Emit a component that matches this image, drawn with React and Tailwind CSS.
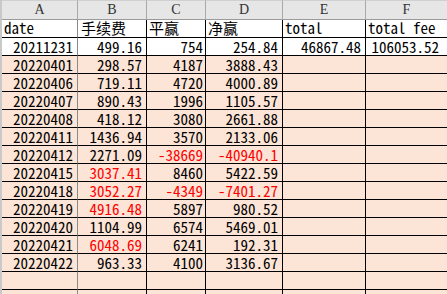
const mono = "font-['Noto_Sans_Mono_CJK_SC','Noto_Sans_CJK_SC',monospace]";

const headers = ['A', 'B', 'C', 'D', 'E', 'F'];

// each row: values for A..F, red = column indexes in red, white = plain background
const rows = [
  { v: ['date', '手续费', '平赢', '净赢', 'total', 'total fee'], text: true, white: true },
  { v: ['20211231', '499.16', '754', '254.84', '46867.48', '106053.52'], white: true },
  { v: ['20220401', '298.57', '4187', '3888.43', '', ''] },
  { v: ['20220406', '719.11', '4720', '4000.89', '', ''] },
  { v: ['20220407', '890.43', '1996', '1105.57', '', ''] },
  { v: ['20220408', '418.12', '3080', '2661.88', '', ''] },
  { v: ['20220411', '1436.94', '3570', '2133.06', '', ''] },
  { v: ['20220412', '2271.09', '-38669', '-40940.1', '', ''], red: [2, 3] },
  { v: ['20220415', '3037.41', '8460', '5422.59', '', ''], red: [1] },
  { v: ['20220418', '3052.27', '-4349', '-7401.27', '', ''], red: [1, 2, 3] },
  { v: ['20220419', '4916.48', '5897', '980.52', '', ''], red: [1] },
  { v: ['20220420', '1104.99', '6574', '5469.01', '', ''] },
  { v: ['20220421', '6048.69', '6241', '192.31', '', ''], red: [1] },
  { v: ['20220422', '963.33', '4100', '3136.67', '', ''] },
  { v: ['', '', '', '', '', ''] },
  { v: ['', '', '', '', '', ''] },
];

// right padding per column so numbers sit where Excel puts them
const padR = ['pr-[4px]', 'pr-[4px]', 'pr-[2px]', 'pr-[4px]', 'pr-[4px]', 'pr-[8px]'];
const padL = ['pl-[2px]', 'pl-[3px]', 'pl-[2px]', 'pl-[2px]', 'pl-[2px]', 'pl-[2px]'];
const borderR = ['border-r border-r-[#8a8a8a]', 'border-r border-r-black', 'border-r border-r-black', 'border-r border-r-black', 'border-r border-r-black', ''];

export default function App() {
  return (
    <div className={`w-[447px] h-[294px] overflow-hidden bg-white ${mono}`}>
      <div className="grid grid-cols-[2px_76px_69px_59px_77px_83px_1fr] grid-rows-[20px_repeat(16,18px)]">
        {/* column header */}
        <div className="bg-[#c9c9c9]" />
        {headers.map((h, i) => (
          <div
            key={h}
            className={`bg-[#e6e6e6] border-t border-t-[#d0d0d0] border-b border-b-[#9a9a9a] ${i < 5 ? 'border-r border-r-[#a8a8a8]' : ''} flex items-center justify-center font-['Liberation_Serif',serif] text-[14px] text-[#333] leading-none`}
          >
            {h}
          </div>
        ))}

        {rows.map((row, r) => (
          <Row key={r} row={row} />
        ))}
      </div>
    </div>
  );
}

function Row({ row }) {
  const red = row.red || [];
  return (
    <>
      <div className="bg-[#c9c9c9]" />
      {row.v.map((val, c) => {
        const bg = row.white ? 'bg-white' : 'bg-[#fce4d6]';
        const align = row.text ? `justify-start ${padL[c]}` : `justify-end ${padR[c]}`;
        return (
          <div
            key={c}
            className={`${bg} ${borderR[c]} border-b border-b-black flex items-end ${align} whitespace-nowrap`}
          >
            <span
              className={`text-[15px] ${row.text ? 'leading-[15px] mb-[2px]' : 'leading-[17px]'} ${red.includes(c) ? 'text-[#ff0000]' : 'text-black'}`}
            >
              {val}
            </span>
          </div>
        );
      })}
    </>
  );
}
